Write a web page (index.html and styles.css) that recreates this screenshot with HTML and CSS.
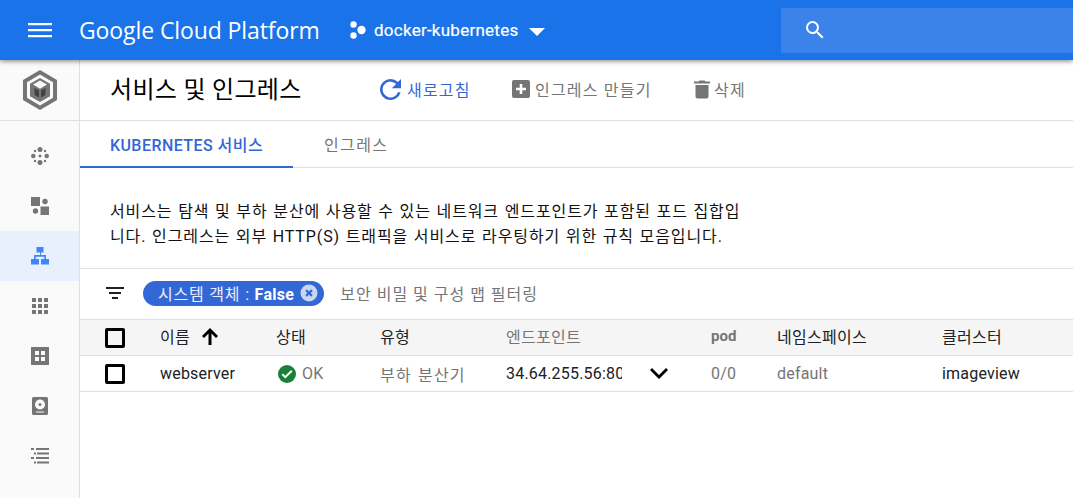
FILE: index.html
```html
<!DOCTYPE html>
<html lang="ko">
<head>
  <meta charset="UTF-8" />
  <title>서비스 및 인그레스 - Google Cloud Platform</title>
  <link rel="stylesheet" href="styles.css">
</head>
<body>

  <header class="topbar">
    <button class="menu-btn" aria-label="menu">
      <svg width="24" height="24" viewBox="0 0 24 24"><path d="M0 5h24v2.200H0zM0 11h24v2.200H0zM0 17h24v2.200H0z" /></svg>
    </button>
    <div class="brand">Google Cloud Platform</div>
    <div class="project">
      <svg width="20" height="20" viewBox="0 0 20 20"><circle cx="5.500" cy="4.500" r="3.200"/><circle cx="5.500" cy="15.500" r="3.200"/><circle cx="13.500" cy="10" r="4.200"/></svg>
      <span>docker-kubernetes</span>
      <svg class="caret" width="16" height="8" viewBox="0 0 16 8"><path d="M0 0h16L8 8z"/></svg>
    </div>
    <div class="search">
      <svg width="24" height="24" viewBox="0 0 24 24"><path d="M15.500 14h-.79l-.28-.27A6.470 6.470 0 0 0 16 9.500 6.500 6.500 0 1 0 9.500 16c1.610 0 3.090-.59 4.230-1.570l.27.28v.79l5 4.990L20.490 19zm-6 0C7.010 14 5 11.990 5 9.500S7.010 5 9.500 5 14 7.010 14 9.500 11.990 14 9.500 14z"/></svg>
    </div>
  </header>

  <div class="layout">
    <!-- left rail -->
    <aside class="rail">
      <div class="rail-logo">
        <svg width="36" height="40" viewBox="0 0 36 40">
          <path d="M18 0 35 10v20L18 40 1 30V10z" fill="#757575"/>
          <path d="M18 4.500 31 12.200v15.600L18 35.500 5 27.800V12.200z" fill="#fafafa"/>
          <path d="M18 8 28 13.800v12.400L18 32 8 26.200V13.800z" fill="#757575"/>
          <path d="M18 10.500 25 14.600 18 18.700 11 14.600z" fill="#fafafa"/>
          <path d="M12.500 18 17 20.600v7L12.500 25zM23.500 18 19 20.600v7l4.500-2.600z" fill="#424242"/>
        </svg>
      </div>
      <nav class="rail-nav">
        <a class="rail-item" href="#">
          <svg width="18" height="18" viewBox="0 0 18 18"><circle cx="9" cy="2.500" r="2.500"/><circle cx="9" cy="15.500" r="2.500"/><circle cx="2.300" cy="9" r="2.300"/><circle cx="15.700" cy="9" r="2.300"/><circle cx="9" cy="9" r="1.500"/><circle cx="4" cy="4" r="1.200"/><circle cx="14" cy="4" r="1.200"/><circle cx="4" cy="14" r="1.200"/><circle cx="14" cy="14" r="1.200"/></svg>
        </a>
        <a class="rail-item" href="#">
          <svg width="18" height="18" viewBox="0 0 18 18"><path d="M0 0h9v9H0zM9.500 9.500H18V18H9.500z"/><circle cx="14" cy="4.500" r="2.700"/><circle cx="4.500" cy="14" r="2.700"/></svg>
        </a>
        <a class="rail-item active" href="#">
          <svg width="18" height="18" viewBox="0 0 18 18"><path d="M5.500 0h7v5.500H10V8h5v4h3v5.500h-8V12h3.300V9.700H4.700V12H8v5.500H0V12h3V8h6V5.500H5.500z"/></svg>
        </a>
        <a class="rail-item" href="#">
          <svg width="16" height="16" viewBox="0 0 16 16"><path d="M0 0h4v4H0zM6 0h4v4H6zM12 0h4v4h-4zM0 6h4v4H0zM6 6h4v4H6zM12 6h4v4h-4zM0 12h4v4H0zM6 12h4v4H6zM12 12h4v4h-4z"/></svg>
        </a>
        <a class="rail-item" href="#">
          <svg width="18" height="18" viewBox="0 0 18 18"><path fill-rule="evenodd" d="M0 0h18v18H0zM4 4v4h4V4zM10 4v4h4V4zM4 10v4h4v-4zM10 10v4h4v-4z"/></svg>
        </a>
        <a class="rail-item" href="#">
          <svg width="16" height="18" viewBox="0 0 16 18"><path fill-rule="evenodd" d="M1.500 0h13A1.500 1.500 0 0 1 16 1.500v15a1.500 1.500 0 0 1-1.500 1.500h-13A1.500 1.500 0 0 1 0 16.500v-15A1.500 1.500 0 0 1 1.500 0zM8 2.500a5 5 0 1 0 0 10 5 5 0 0 0 0-10zM8 6a1.500 1.500 0 1 1 0 3 1.500 1.500 0 0 1 0-3zM4 14.500v1h8v-1z"/></svg>
        </a>
        <a class="rail-item" href="#">
          <svg width="18" height="16" viewBox="0 0 18 16"><path d="M0 0h3v2H0zM5 0h13v2H5zM3 4.500h2v2H3zM6 4.500h12v2H6zM0 9h3v2H0zM5 9h13v2H5zM3 13.500h2v2H3zM6 13.500h12v2H6z"/></svg>
        </a>
      </nav>
    </aside>

    <main class="content">
      <div class="toolbar">
        <h1 class="page-title">서비스 및 인그레스</h1>
        <a class="tool tool-refresh" href="#">
          <svg width="21" height="21" viewBox="4 4 16 16"><path d="M17.650 6.350A7.958 7.958 0 0 0 12 4a8 8 0 1 0 7.730 10h-2.080A6 6 0 1 1 12 6c1.660 0 3.140.69 4.220 1.780L13 11h7V4z"/></svg>
          <span>새로고침</span>
        </a>
        <a class="tool tool-create" href="#">
          <svg width="18" height="18" viewBox="0 0 18 18"><path fill-rule="evenodd" d="M2 0h14a2 2 0 0 1 2 2v14a2 2 0 0 1-2 2H2a2 2 0 0 1-2-2V2a2 2 0 0 1 2-2zm5.700 4v3.700H4v2.600h3.700V14h2.600v-3.700H14V7.700h-3.700V4z"/></svg>
          <span>인그레스 만들기</span>
        </a>
        <a class="tool tool-delete" href="#">
          <svg width="16" height="20" viewBox="0 0 16 20"><path d="M1.500 6h13v11.500a2 2 0 0 1-2 2h-9a2 2 0 0 1-2-2zM0 2.500h4.500l1-1h5l1 1H16v2H0z"/></svg>
          <span>삭제</span>
        </a>
      </div>

      <div class="tabs">
        <a class="tab selected" href="#">KUBERNETES 서비스</a>
        <a class="tab" href="#">인그레스</a>
      </div>

      <p class="intro">서비스는 탐색 및 부하 분산에 사용할 수 있는 네트워크 엔드포인트가 포함된 포드 집합입니다. 인그레스는 외부 HTTP(S) 트래픽을 서비스로 라우팅하기 위한 규칙 모음입니다.</p>

      <div class="filter-bar">
        <svg class="filter-icon" width="18" height="12" viewBox="0 0 18 12"><path d="M0 0h18v2H0zM3 5h12v2H3zM6 10h6v2H6z"/></svg>
        <span class="chip">
          <span class="chip-label">시스템 객체 : <b>False</b></span>
          <svg width="18" height="18" viewBox="0 0 18 18"><circle cx="9" cy="9" r="8.500" fill="#c9d6f3"/><path d="m5.300 6.900 1.600-1.600L9 7.400l2.100-2.100 1.600 1.600L10.600 9l2.100 2.100-1.600 1.600L9 10.600l-2.100 2.100-1.600-1.600L7.400 9z" fill="#3367d6"/></svg>
        </span>
        <span class="filter-hint">보안 비밀 및 구성 맵 필터링</span>
      </div>

      <div class="row head">
        <span class="check"></span>
        <span class="cell name-head">이름
          <svg width="16" height="18" viewBox="0 0 16 18"><path d="M8 1 16 9 14 11 9.500 6.500V18h-3V6.500L2 11 0 9z"/></svg>
        </span>
        <span class="cell">상태</span>
        <span class="cell">유형</span>
        <span class="cell muted">엔드포인트</span>
        <span class="cell muted pod">pod</span>
        <span class="cell">네임스페이스</span>
        <span class="cell">클러스터</span>
      </div>
      <div class="row">
        <span class="check"></span>
        <span class="cell">webserver</span>
        <span class="cell status">
          <svg width="18" height="18" viewBox="0 0 18 18"><circle cx="9" cy="9" r="9" fill="#188038"/><path d="M7.300 13.600 3.500 9.800 5 8.400l2.300 2.300L13 5l1.500 1.400z" fill="#fff"/></svg>
          <span class="muted">OK</span>
        </span>
        <span class="cell muted spaced">부하 분산기</span>
        <span class="cell endpoint">
          <span class="endpoint-text">34.64.255.56:80</span>
          <svg width="18" height="11" viewBox="0 0 18 11"><path d="M2 0 0 2l9 9 9-9-2-2-7 7z"/></svg>
        </span>
        <span class="cell muted">0/0</span>
        <span class="cell muted">default</span>
        <span class="cell">imageview</span>
      </div>
    </main>
  </div>

</body>
</html>
```

FILE: styles.css
```css
:root {
  --blue: #1a73e8;
  --accent: #3367d6;
  --grey: #757575;
  --line: #e0e0e0;
  --text: #202124;
}

* {
  box-sizing: border-box;
}

body {
  margin: 0;
  height: 498px;
  overflow: hidden;
  background: #fff;
  color: var(--text);
  font-family: Roboto, "Noto Sans CJK KR", sans-serif;
  font-size: 16px;
}

a {
  text-decoration: none;
  color: inherit;
}

/* Top bar */
.topbar {
  height: 60px;
  background: var(--blue);
  color: #fff;
  display: flex;
  align-items: center;
  box-shadow: 0 1px 5px rgba(0,0,0,0.5);
  position: relative;
  z-index: 2;
}

.topbar svg {
  fill: #fff;
}

.menu-btn {
  background: none;
  border: none;
  padding: 0;
  margin-left: 28px;
  width: 24px;
  height: 24px;
}

.brand {
  margin-left: 27px;
  width: 269px;
  font-family: "Open Sans", sans-serif;
  font-size: 23px;
  letter-spacing: -0.1px;
  white-space: nowrap;
}

.project {
  display: flex;
  align-items: center;
  font-size: 17px;
  width: 433px;
}

.project span {
  margin-left: 6px;
  letter-spacing: 0.25px;
  -webkit-text-stroke: 0.2px #fff;
}

.caret {
  margin-left: 11px;
  margin-top: 3px;
}

.search {
  flex: 1;
  height: 45px;
  background: #3b82ea;
  border-radius: 2px 0 0 2px;
  display: flex;
  align-items: center;
  padding-left: 22px;
}

.layout {
  display: flex;
  height: 438px;
}

/* Left rail */
.rail {
  width: 80px;
  flex: none;
  background: #fafafa;
  border-right: 1px solid var(--line);
}

.rail-logo {
  height: 61px;
  border-bottom: 1px solid var(--line);
  display: flex;
  align-items: center;
  justify-content: center;
}

.rail-nav {
  padding-top: 10px;
}

.rail-item {
  height: 50px;
  display: flex;
  align-items: center;
  justify-content: center;
}

.rail-item svg {
  fill: var(--grey);
}

.rail-item.active {
  background: #e8f0fe;
}

.rail-item.active svg {
  fill: #4285f4;
}

/* Main */
.content {
  flex: 1;
  min-width: 0;
}

.toolbar {
  height: 61px;
  border-bottom: 1px solid var(--line);
  display: flex;
  align-items: center;
  padding-left: 30px;
}

.page-title {
  margin: 0 0 5px;
  width: 270px;
  font-size: 24px;
  font-weight: 400;
  letter-spacing: 0.3px;
  color: #000;
}

.tool {
  display: flex;
  align-items: center;
  margin-bottom: 2px;
  letter-spacing: 1.2px;
  color: var(--grey);
}

.tool svg {
  fill: var(--grey);
}

.tool-refresh {
  color: var(--accent);
  width: 132px;
  gap: 6px;
}

.tool-refresh svg {
  fill: var(--accent);
}

.tool-create {
  width: 182px;
  gap: 5px;
}

.tool-delete {
  gap: 4px;
}

.tabs {
  height: 47px;
  border-bottom: 1px solid var(--line);
  display: flex;
}

.tab {
  display: flex;
  align-items: center;
  justify-content: center;
  height: 46px;
  padding: 0 31px;
  letter-spacing: 1.4px;
  color: var(--grey);
}

.tab.selected {
  width: 213px;
  padding: 0;
  height: 47px;
  margin-bottom: -1px;
  color: var(--accent);
  font-weight: 500;
  letter-spacing: 0.45px;
  border-bottom: 2px solid var(--accent);
}

.intro {
  margin: 0;
  width: 670px;
  height: 100px;
  padding: 31px 0 0 30px;
  line-height: 25px;
  letter-spacing: 0.9px;
  word-spacing: 0.8px;
  color: #111;
}

.filter-bar {
  height: 51px;
  border-top: 1px solid var(--line);
  display: flex;
  align-items: center;
  padding: 0 0 2px 26px;
}

.filter-icon {
  fill: #202124;
  margin-right: 19px;
}

.chip {
  display: inline-flex;
  align-items: center;
  gap: 6px;
  height: 25px;
  padding: 0 6px 0 15px;
  background: var(--accent);
  color: #e8eefb;
  border-radius: 13px;
}

.chip-label {
  letter-spacing: 0.8px;
  white-space: nowrap;
}

.chip b {
  font-weight: 700;
  color: #fff;
  letter-spacing: 0.3px;
}

.filter-hint {
  margin-left: 16px;
  letter-spacing: 1px;
  color: var(--grey);
}

/* Table rows */
.row {
  display: grid;
  grid-template-columns: 55px 116px 104px 126px 205px 66px 165px 1fr;
  align-items: center;
  height: 36px;
  padding-left: 25px;
  border-bottom: 1px solid var(--line);
  letter-spacing: 0.2px;
  white-space: nowrap;
}

.row.head {
  height: 37px;
  background: #f5f5f5;
  border-top: 1px solid var(--line);
  letter-spacing: 0.3px;
}

.row.head .cell {
  margin-bottom: 4px;
}

.check {
  width: 20px;
  height: 20px;
  border: 3px solid #000;
  border-radius: 2px;
}

.cell {
  display: flex;
  align-items: center;
  color: #202124;
}

.muted {
  color: var(--grey);
}

.cell.muted {
  color: var(--grey);
}

.spaced {
  letter-spacing: 1.2px;
  word-spacing: 1px;
}

.name-head svg {
  margin-left: 12px;
}

.pod {
  font-weight: 700;
  font-size: 15px;
  letter-spacing: 0;
}

.status {
  gap: 6px;
  padding-left: 2px;
}

.endpoint {
  width: 162px;
  justify-content: space-between;
}

.endpoint-text {
  width: 116px;
  overflow: hidden;
}
```
